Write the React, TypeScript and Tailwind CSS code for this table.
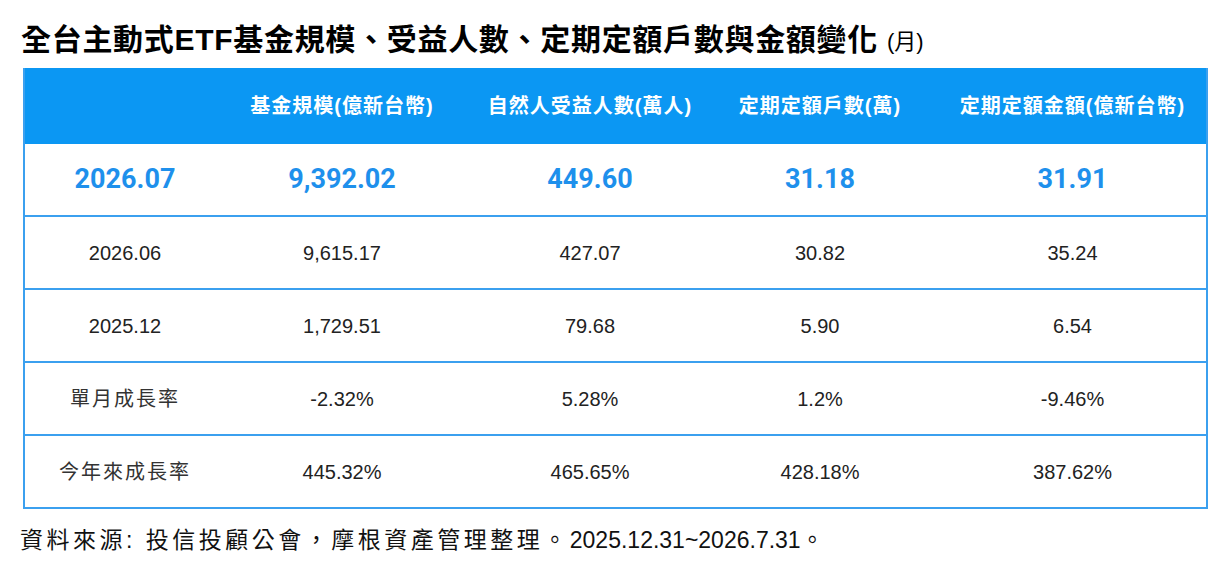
const font = { fontFamily: '"Liberation Sans", "Noto Sans CJK TC", sans-serif' };
const boldNum = { fontFamily: 'Roboto, "Noto Sans CJK TC", sans-serif' };

const headers = ['', '基金規模(億新台幣)', '自然人受益人數(萬人)', '定期定額戶數(萬)', '定期定額金額(億新台幣)'];

const highlight = ['2026.07', '9,392.02', '449.60', '31.18', '31.91'];

const rows = [
  { label: '2026.06', cjk: false, vals: ['9,615.17', '427.07', '30.82', '35.24'] },
  { label: '2025.12', cjk: false, vals: ['1,729.51', '79.68', '5.90', '6.54'] },
  { label: '單月成長率', cjk: true, vals: ['-2.32%', '5.28%', '1.2%', '-9.46%'] },
  { label: '今年來成長率', cjk: true, vals: ['445.32%', '465.65%', '428.18%', '387.62%'] },
];

const cols = 'grid grid-cols-[200px_234px_262px_198px_1fr] items-center';

export default function App() {
  return (
    <div className="h-[562px] w-[1227px] overflow-hidden bg-white text-[#222]" style={font}>
      {/* Title */}
      <div className="flex items-end pl-[21px] pt-[25px]">
        <h1 className="text-[30px] font-bold leading-[30px] tracking-[0.7px] text-black">
          全台主動式ETF基金規模、受益人數、定期定額戶數與金額變化
        </h1>
        <span className="ml-[9px] text-[22px] leading-[26px] text-black">(月)</span>
      </div>

      {/* Table */}
      <div className="ml-[23px] mt-[13px] w-[1185px] border-x-2 border-[#3ba0ef]">
        <div className={`${cols} h-[76px] bg-[#0b97f3] text-[20px] font-bold tracking-[1px] text-white`}>
          {headers.map((h, i) => (
            <div key={i} className={`text-center ${i === 4 ? 'pl-[20px]' : ''}`}>{h}</div>
          ))}
        </div>

        <div className={`${cols} h-[73px] border-b-2 border-[#3ba0ef] text-[27px] font-bold text-[#1e90ec]`} style={boldNum}>
          {highlight.map((v, i) => (
            <div key={i} className={`text-center ${i === 4 ? 'pl-[20px]' : ''}`}>{v}</div>
          ))}
        </div>

        {rows.map((r) => (
          <div key={r.label} className={`${cols} h-[73px] border-b-2 border-[#3ba0ef] text-[20px]`}>
            <div className={`text-center ${r.cjk ? 'tracking-[2px] text-[#333]' : ''}`}>{r.label}</div>
            {r.vals.map((v, i) => (
              <div key={i} className={`text-center ${i === 3 ? 'pl-[20px]' : ''}`}>{v}</div>
            ))}
          </div>
        ))}
      </div>

      {/* Source note */}
      <p className="pl-[20px] pt-[17px] text-[23px] leading-[28px] text-[#111]">
        <span className="tracking-[3.5px]">資料來源: 投信投顧公會，摩根資產管理整理。</span>
        <span>2025.12.31~2026.7.31。</span>
      </p>
    </div>
  );
}
